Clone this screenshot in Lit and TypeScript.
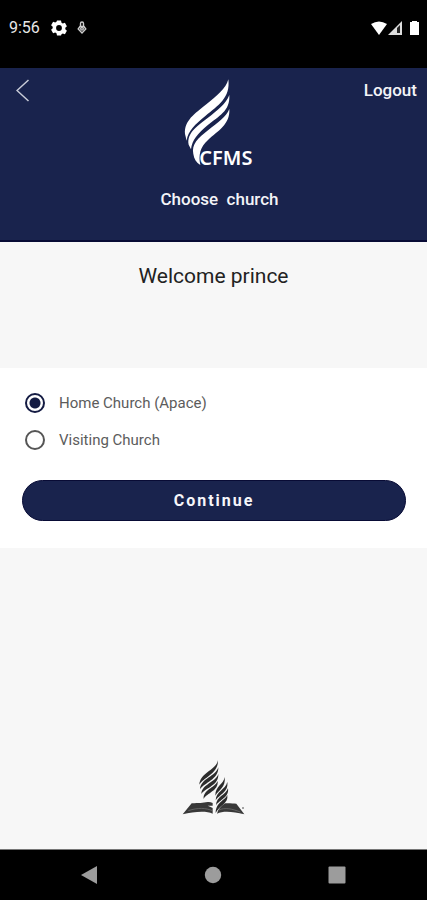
import { LitElement, html, css, svg } from "lit";
import { customElement, state } from "lit/decorators.js";

const CHURCHES = [
  { id: "home", label: "Home Church (Apace)" },
  { id: "visiting", label: "Visiting Church" },
];

const brandLogo = svg`
  <svg class="brand" viewBox="42 24 216 288" role="img" aria-label="CFMS">
    <g fill="#fff">
      <path d="M175 28C168 56 140 78 110 102C74 131 42 152 45 192L50 212C54 182 76 163 106 138C144 107 182 84 175 28Z"/>
      <path d="M178 75C168 102 142 121 112 145C80 170 50 190 56 224L63 238C66 210 84 190 110 168C146 138 181 124 178 75Z"/>
      <path d="M178 117C168 142 143 157 115 180C84 205 64 222 70 252C72 267 79 278 91 285C85 255 90 232 114 210C144 182 181 163 178 117Z"/>
    </g>
    <text class="wordmark" x="88" y="284">CFMS</text>
  </svg>`;

const emblem = svg`
  <svg class="emblem" viewBox="36 26 192 168" aria-hidden="true">
    <g fill="#2c2c2c">
      <path d="M144 30C138 60 90 66 88 103C100 82 145 70 144 30Z"/>
      <path d="M145 51C138 78 92 84 90 117C103 97 146 88 145 51Z"/>
      <path d="M145 71C138 96 95 101 94 131C107 112 147 105 145 71Z"/>
      <path d="M143 92C134 114 99 117 101 146C111 127 146 122 143 92Z"/>
      <path d="M164 80C160 104 136 106 136 136C146 118 168 112 164 80Z"/>
      <path d="M172 95C166 119 138 122 137 150C148 132 176 126 172 95Z"/>
      <path d="M174 114C166 136 139 138 138 165C149 148 178 142 174 114Z"/>
      <path d="M172 134C164 152 138 154 137 188C147 166 176 160 172 134Z"/>
    </g>
    <g fill="#383838">
      <path d="M65 159C87 158 98 158 113 155Q121 154 128 158V166H113Q120 168 128 173V190C108 180 70 184 38 192Z"/>
      <path d="M165 159C179 158 190 160 199 160L223 192C190 184 160 181 141 190C144 176 152 169 165 159Z"/>
    </g>
    <path d="M55 181C85 171 108 173 127 181M146 179C166 171 185 175 211 185" fill="none" stroke="#777" stroke-width="2"/>
    <circle cx="219" cy="173" r="3" fill="#888"/>
  </svg>`;

@customElement("app-root")
export class AppRoot extends LitElement {
  @state() private church = "home";

  static styles = css`
    :host {
      display: flex;
      flex-direction: column;
      min-height: 100vh;
      background: #f7f7f7;
      color: #222;
      font-family: Roboto, "Liberation Sans", sans-serif;
    }
    * { box-sizing: border-box; }
    svg { display: block; }
    button { font: inherit; border: 0; cursor: pointer; }
    .status {
      display: flex;
      justify-content: space-between;
      height: 68px;
      padding: 16px 6px 28px 9px;
      background: #000;
      color: #e8e8e8;
      font-size: 16px;
      line-height: 24px;
    }
    .status-group { display: flex; align-items: center; }
    .gear { width: 16px; height: 16px; margin-left: 11px; }
    .mic { width: 10px; height: 14px; margin-left: 10px; }
    .signals { width: 50px; height: 16px; }
    .header {
      display: grid;
      grid-template-columns: 80px 1fr 68px;
      align-items: start;
      min-height: 174px;
      padding-bottom: 28px;
      background: #19234d;
      border-bottom: 2px solid #080b35;
      color: #f4f4f8;
    }
    .back { width: 44px; height: 44px; padding: 10px 16px; background: none; }
    .back svg { width: 14px; height: 24px; }
    .logout {
      justify-self: end;
      padding: 10px;
      background: none;
      color: inherit;
      font-size: 17px;
      font-weight: 500;
      line-height: 24px;
    }
    .intro { display: flex; flex-direction: column; align-items: center; padding-top: 10px; gap: 13px; }
    .brand { width: 72px; height: 96px; }
    .wordmark { font-family: "Noto Sans", sans-serif; font-size: 60px; font-weight: 600; fill: #fff; }
    .subtitle { margin: 0; font-size: 17px; font-weight: 500; line-height: 24px; white-space: pre; }
    .welcome {
      margin: 0;
      padding: 20px 16px 78px;
      font-size: 21px;
      font-weight: 400;
      line-height: 28px;
      text-align: center;
    }
    .choices { padding: 16px 21px 27px 22px; background: #fff; }
    .options { margin: 0; padding: 0; border: 0; }
    .option {
      display: flex;
      align-items: center;
      gap: 14px;
      height: 37px;
      padding-left: 3px;
      color: #5c5c5c;
      font-size: 15px;
    }
    .radio {
      appearance: none;
      width: 20px;
      height: 20px;
      margin: 0;
      border: 2px solid #555;
      border-radius: 50%;
    }
    .radio:checked {
      border-color: #141b43;
      background: radial-gradient(circle, #141b43 5px, #fff 6px);
    }
    .continue {
      display: block;
      width: 100%;
      height: 41px;
      margin-top: 22px;
      padding: 0;
      border: 1px solid #080b35;
      border-radius: 21px;
      background: #19234d;
      color: #f6f6fa;
      font-size: 16px;
      font-weight: 700;
      letter-spacing: 2px;
    }
    .foot { display: flex; justify-content: center; margin-top: auto; padding-bottom: 34px; }
    .emblem { width: 64px; height: 56px; }
    .nav {
      display: flex;
      justify-content: space-between;
      height: 51px;
      padding: 4px 69px 5px 68px;
      background: #000;
      border-top: 1px solid #777;
    }
    .nav-button { width: 42px; height: 42px; padding: 11px; background: none; }
    .nav-button svg { width: 20px; height: 20px; fill: #9c9c9c; }
  `;

  render() {
    return html`
      <div class="status">
        <div class="status-group">
          <span>9:56</span>
          <svg class="gear" viewBox="4 4 16 16" aria-hidden="true">
            <path fill="#fff" fill-rule="evenodd" d="M10 5h4l.5 2.2 1.3.8 2.1-.7 2 3.4-1.6 1.5v1.6l1.6 1.5-2 3.4-2.1-.7-1.3.8L14 20h-4l-.5-2.2-1.3-.8-2.1.7-2-3.4 1.6-1.5v-1.6L4.1 9.7l2-3.4 2.1.7 1.3-.8zM12 9.6a2.9 2.9 0 1 0 0 5.8a2.9 2.9 0 0 0 0-5.8z" transform="translate(0 -.5)"/>
          </svg>
          <svg class="mic" viewBox="0 0 10 14" fill="none" stroke="#ccc" stroke-width="1.4" aria-hidden="true">
            <path d="M3.5 5V2.5a1.5 1.5 0 0 1 3 0V5M5 11v2M3 5.5L1.2 8 5 12l3.8-4L7 5.5z"/>
            <circle cx="5" cy="7.8" r="1.3"/>
          </svg>
        </div>
        <div class="status-group">
          <svg class="signals" viewBox="0 0 50 16" aria-hidden="true">
            <path d="M0 4Q8-1 16 4L8 15Z" fill="#fff"/>
            <path d="M31 1V15H17Z" fill="#ddd"/>
            <path d="M26 8L29 5V13H26Z" fill="#222"/>
            <path d="M39 2h2V1h5v1h2v13h-9z" fill="#fff"/>
          </svg>
        </div>
      </div>

      <header class="header">
        <button class="back" aria-label="Back">
          <svg viewBox="0 0 14 24" fill="none" stroke="#c9ccd8" stroke-width="1.5"><path d="M12.5 2L1 12.5 12.5 23"/></svg>
        </button>
        <div class="intro">
          ${brandLogo}
          <p class="subtitle">Choose  church</p>
        </div>
        <button class="logout">Logout</button>
      </header>

      <h1 class="welcome">Welcome prince</h1>

      <form class="choices" @submit=${(e: Event) => e.preventDefault()}>
        <fieldset class="options" aria-label="Church">
          ${CHURCHES.map((c) => html`
            <label class="option">
              <input class="radio" type="radio" name="church" .value=${c.id}
                .checked=${this.church === c.id}
                @change=${() => (this.church = c.id)} />
              <span>${c.label}</span>
            </label>`)}
        </fieldset>
        <button class="continue" type="submit">Continue</button>
      </form>

      <footer class="foot">${emblem}</footer>

      <nav class="nav" aria-label="System">
        <button class="nav-button" aria-label="Back"><svg viewBox="0 0 20 20"><path d="M2 10L18 1V19Z"/></svg></button>
        <button class="nav-button" aria-label="Home"><svg viewBox="0 0 20 20"><circle cx="10" cy="10" r="8.2"/></svg></button>
        <button class="nav-button" aria-label="Overview"><svg viewBox="0 0 20 20"><rect x="1.5" y="1.5" width="17" height="17" rx="1"/></svg></button>
      </nav>
    `;
  }
}
